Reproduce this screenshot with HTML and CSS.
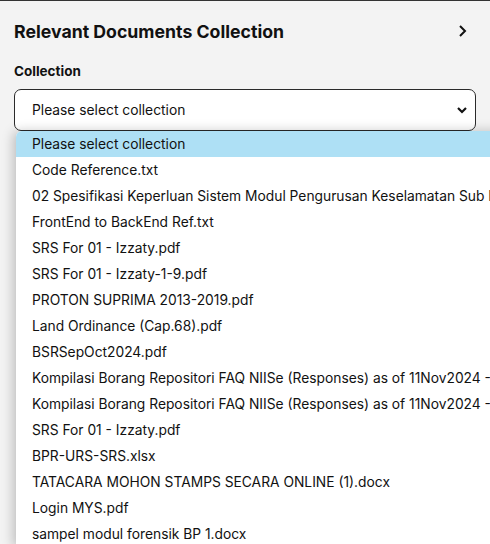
FILE: index.html
```html
<!DOCTYPE html>
<html>
<head>
<meta charset="utf-8">
<link rel="stylesheet" href="styles.css">
</head>
<body>
<div class="panel">
  <div class="header">
    <h2 class="title">Relevant Documents Collection</h2>
    <svg class="chev-right" width="12" height="14" viewBox="0 0 12 14"><path d="M3 2 L8 7 L3 12" fill="none" stroke="#111" stroke-width="2"/></svg>
  </div>
  <div class="field">
    <label class="label">Collection</label>
    <div class="select">
      <span>Please select collection</span>
      <svg class="chev-down" width="12" height="10" viewBox="0 0 12 10"><path d="M2 3 L6 7 L10 3" fill="none" stroke="#111" stroke-width="2.2"/></svg>
    </div>
    <div class="dropdown">
      <div class="opt selected">Please select collection</div>
      <div class="opt">Code Reference.txt</div>
      <div class="opt">02 Spesifikasi Keperluan Sistem Modul Pengurusan Keselamatan Sub Modul</div>
      <div class="opt">FrontEnd to BackEnd Ref.txt</div>
      <div class="opt">SRS For 01 - Izzaty.pdf</div>
      <div class="opt">SRS For 01 - Izzaty-1-9.pdf</div>
      <div class="opt">PROTON SUPRIMA 2013-2019.pdf</div>
      <div class="opt">Land Ordinance (Cap.68).pdf</div>
      <div class="opt">BSRSepOct2024.pdf</div>
      <div class="opt">Kompilasi Borang Repositori FAQ NIISe (Responses) as of 11Nov2024 - v1</div>
      <div class="opt">Kompilasi Borang Repositori FAQ NIISe (Responses) as of 11Nov2024 - v2</div>
      <div class="opt">SRS For 01 - Izzaty.pdf</div>
      <div class="opt">BPR-URS-SRS.xlsx</div>
      <div class="opt">TATACARA MOHON STAMPS SECARA ONLINE (1).docx</div>
      <div class="opt">Login MYS.pdf</div>
      <div class="opt">sampel modul forensik BP 1.docx</div>
    </div>
  </div>
</div>
</body>
</html>
```
FILE: styles.css
```css
html, body {
  margin: 0;
  padding: 0;
  overflow: hidden;
  height: 544px;
}
body {
  background: #f3f3f3;
  border-top: 1px solid #333;
  font-family: Inter, "Noto Sans", sans-serif;
  color: #111;
}
.panel {
  padding: 0 14px;
}
.header {
  display: flex;
  align-items: center;
  justify-content: space-between;
  height: 60px;
}
.title {
  margin: 0;
  font-size: 17.7px;
  font-weight: 700;
  letter-spacing: 0;
}
.chev-right {
  margin-right: 7px;
}
.label {
  display: block;
  font-size: 13.5px;
  font-weight: 700;
  line-height: 20px;
}
.select {
  margin-top: 8px;
  height: 40px;
  border: 1px solid #2a2a2a;
  border-radius: 7px;
  background: #fff;
  display: flex;
  align-items: center;
  justify-content: space-between;
  padding: 0 7px 0 17px;
  font-size: 13.8px;
}
.dropdown {
  position: absolute;
  left: 16px;
  top: 131px;
  width: 560px;
  background: #fff;
  border-top-left-radius: 6px;
  box-shadow: -3px 0 12px rgba(0,0,0,0.22);
}
.opt {
  height: 26px;
  line-height: 26px;
  padding-left: 16px;
  font-size: 13.8px;
  white-space: nowrap;
  color: #111;
}
.opt.selected {
  background: #aee0f5;
  border-top-left-radius: 6px;
}
```
